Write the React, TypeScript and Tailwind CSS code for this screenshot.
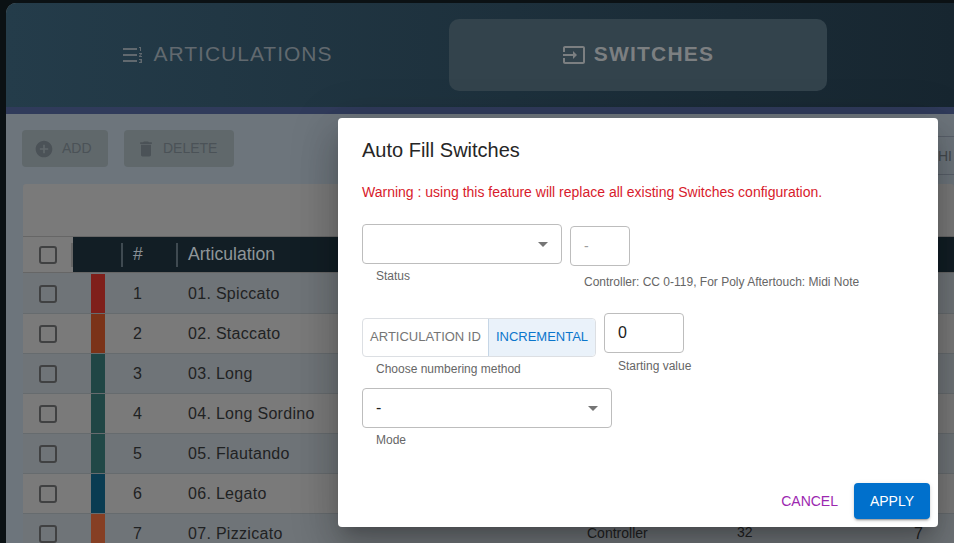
const rows = [
  { n: 1, name: '01. Spiccato', color: 'bg-[#7f1f1a]' },
  { n: 2, name: '02. Staccato', color: 'bg-[#7b3318]' },
  { n: 3, name: '03. Long', color: 'bg-[#204645]' },
  { n: 4, name: '04. Long Sordino', color: 'bg-[#204645]' },
  { n: 5, name: '05. Flautando', color: 'bg-[#214847]' },
  { n: 6, name: '06. Legato', color: 'bg-[#0a3c52]' },
  { n: 7, name: '07. Pizzicato', color: 'bg-[#863f24]' },
];

function Icon({ d, className = '' }: { d: string; className?: string }) {
  return (
    <svg viewBox="0 0 24 24" fill="currentColor" className={className}>
      <path d={d} />
    </svg>
  );
}

function Checkbox() {
  return <div className="w-[18px] h-[18px] rounded-[3px] border-2 border-[#404142]" />;
}

function Caret() {
  return <div className="w-0 h-0 border-x-[5px] border-x-transparent border-t-[5px] border-t-[#757575]" />;
}

function Hint({ className = '', children }: { className?: string; children: React.ReactNode }) {
  return <div className={`text-[12px] leading-[14px] text-[#666] ${className}`}>{children}</div>;
}

export default function App() {
  return (
    <div className="relative w-[954px] h-[543px] overflow-hidden bg-[#0b1114] pt-[3px] pl-[6px] font-['Liberation_Sans',Arial,sans-serif]">
      {/* Window behind the backdrop */}
      <div className="w-[948px] h-[540px] rounded-tl-[10px] overflow-hidden flex flex-col bg-[#6d757c]">
        <div className="h-[104px] shrink-0 flex gap-[33px] pl-[32px] pt-[16px] bg-gradient-to-r from-[#243c4a] to-[#172630]">
          <div className="w-[378px] h-[72px] flex items-center justify-center gap-[8px] text-[#61696f]">
            <Icon className="w-6 h-6" d="M18 17h2v.5h-1v1h1v.5h-2v1h3v-4h-3zm1-9h1V4h-2v1h1zm-1 3h1.8L18 13.1v.9h3v-1h-1.8l1.8-2.1V10h-3zM2 5h14v2H2zm0 12h14v2H2zm0-6h14v2H2z" />
            <span className="text-[21px] leading-[24px] -mt-[2px] tracking-[1px]">ARTICULATIONS</span>
          </div>
          <div className="w-[378px] h-[72px] flex items-center justify-center gap-[8px] rounded-[10px] bg-[#33434c] text-[#7c7f81]">
            <Icon className="w-6 h-6" d="M21 3.01H3c-1.1 0-2 .9-2 2V9h2V4.99h18v14.03H3V15H1v4.01c0 1.1.9 1.98 2 1.98h18c1.1 0 2-.88 2-1.98v-14c0-1.11-.9-2-2-2zM11 16l4-4-4-4v3H1v2h10v3z" />
            <span className="text-[21px] leading-[24px] -mt-[2px] font-bold tracking-[1.2px]">SWITCHES</span>
          </div>
        </div>
        <div className="h-[7px] shrink-0 bg-[#303b5b]" />

        <div className="flex-1 pt-[16px]">
          <div className="flex gap-[16px] pl-[16px] text-[14px] text-[#4b5257]">
            <div className="w-[86px] h-[37px] rounded-[4px] bg-[#60686b] flex items-center pl-[13px] gap-[8px]">
              <Icon className="w-5 h-5 -ml-[1px]" d="M12 2C6.48 2 2 6.48 2 12s4.48 10 10 10 10-4.48 10-10S17.52 2 12 2zm5 11h-4v4h-2v-4H7v-2h4V7h2v4h4v2z" />
              <span>ADD</span>
            </div>
            <div className="w-[110px] h-[37px] rounded-[4px] bg-[#60686b] flex items-center pl-[12px] gap-[7px]">
              <Icon className="w-5 h-5" d="M6 19c0 1.1.9 2 2 2h8c1.1 0 2-.9 2-2V7H6v12zM19 4h-3.5l-1-1h-5l-1 1H5v2h14V4z" />
              <span>DELETE</span>
            </div>
          </div>

          <div className="mt-[17px] ml-[17px] rounded-t-[3px] overflow-hidden">
            <div className="h-[53px] bg-[#7a7a7a] border-b border-[#666]" />
            <div className="h-[36px] flex bg-[#121e25] border-b border-[#666] text-[17.6px]">
              <div className="w-[50px] bg-[#7a7a7a] flex items-center justify-between pl-[16px]">
                <Checkbox />
                <div className="w-[2px] h-[24px] bg-[#666]" />
              </div>
              <div className="w-[50px] flex items-center justify-end">
                <div className="w-[2px] h-[24px] bg-[#3f4a51]" />
              </div>
              <div className="w-[55px] flex items-center justify-between pl-[10px] text-[#8a9196]">
                <span>#</span>
                <div className="w-[2px] h-[24px] bg-[#3f4a51]" />
              </div>
              <div className="flex items-center pl-[10px] text-[#8f9599]">Articulation</div>
            </div>
            {rows.map((r, i) => (
              <div
                key={r.n}
                className={`h-[40px] flex items-stretch border-t text-[16px] tracking-[0.3px] text-[#1f2223] ${i === 0 ? 'border-[#6f7478]' : 'border-[#666b6e]'} ${i % 2 === 0 ? 'bg-[#6f7478]' : 'bg-[#7a7a7a]'}`}
              >
                <div className="w-[68px] flex items-center pl-[16px] shrink-0">
                  <Checkbox />
                </div>
                <div className={`w-[14px] shrink-0 ${r.color}`} />
                <div className="w-[28px] shrink-0" />
                <div className="w-[55px] shrink-0 flex items-center">{r.n}</div>
                <div className="w-[399px] shrink-0 flex items-center">{r.name}</div>
                <div className="w-[150px] shrink-0 flex items-center text-[14px] tracking-normal">{r.n === 7 ? 'Controller' : ''}</div>
                <div className="w-[177px] shrink-0 flex items-center pb-[2px] text-[14px] tracking-normal">{r.n === 7 ? '32' : ''}</div>
                <div className="flex items-center">{r.n === 7 ? '7' : ''}</div>
              </div>
            ))}
          </div>
        </div>
      </div>

      {/* Button peeking out beside the dialog */}
      <div className="absolute left-[938px] top-[136px] w-[16px] h-[39px] border-y border-[#59606a] text-[14px] leading-[38px] text-[#444a4e] overflow-hidden">
        HI
      </div>

      {/* Dialog */}
      <div className="absolute left-[338px] top-[118px] w-[600px] h-[409px] rounded-[4px] bg-white px-[24px] pt-[20px] flex flex-col shadow-[0_11px_15px_-7px_rgba(0,0,0,0.2),0_24px_38px_3px_rgba(0,0,0,0.14),0_9px_46px_8px_rgba(0,0,0,0.12)]">
        <h2 className="text-[20px] leading-[24px] text-[#262626]">Auto Fill Switches</h2>
        <p className="mt-[22px] text-[14px] leading-[16px] text-[#d81b2c]">
          Warning : using this feature will replace all existing Switches configuration.
        </p>

        <div className="mt-[24px] flex gap-[8px]">
          <div>
            <div className="w-[200px] h-[40px] rounded-[4px] border border-[#bdbdbd] flex items-center justify-end pr-[13px]">
              <Caret />
            </div>
            <Hint className="mt-[5px] ml-[14px]">Status</Hint>
          </div>
          <div className="pt-[2px]">
            <div className="w-[60px] h-[40px] rounded-[4px] border border-[#bdbdbd] flex items-center pl-[13px] text-[14px] text-[#9e9e9e]">
              -
            </div>
            <Hint className="mt-[9px] ml-[14px] whitespace-nowrap">Controller: CC 0-119, For Poly Aftertouch: Midi Note</Hint>
          </div>
        </div>

        <div className="mt-[24px] flex gap-[8px]">
          <div className="pt-[5px]">
            <div className="w-[234px] h-[39px] flex rounded-[4px] border border-[#dcdfe3] text-[13px] leading-[15px]">
              <div className="w-[125px] flex items-center justify-center pb-[2px] text-[#757575]">ARTICULATION ID</div>
              <div className="flex-1 flex items-center justify-center pb-[2px] rounded-r-[4px] border-l border-[#c6d6e6] bg-[#eaf2fa] text-[#0b76cc]">
                INCREMENTAL
              </div>
            </div>
            <Hint className="mt-[5px] ml-[14px]">Choose numbering method</Hint>
          </div>
          <div>
            <div className="w-[80px] h-[40px] rounded-[4px] border border-[#bdbdbd] flex items-center pl-[13px] text-[16px] text-[#212121]">
              0
            </div>
            <Hint className="mt-[6px] ml-[14px]">Starting value</Hint>
          </div>
        </div>

        <div className="mt-[12px]">
          <div className="w-[250px] h-[40px] rounded-[4px] border border-[#bdbdbd] flex items-center justify-between pl-[13px] pr-[13px] text-[16px] text-[#212121]">
            <span>-</span>
            <Caret />
          </div>
          <Hint className="mt-[5px] ml-[14px]">Mode</Hint>
        </div>

        <div className="mt-auto mb-[8px] -mr-[16px] flex items-center justify-end gap-[16px] text-[14px]">
          <span className="text-[#9c27b0]">CANCEL</span>
          <div className="w-[76px] h-[36px] rounded-[4px] bg-[#0070cc] text-white flex items-center justify-center shadow-[0_3px_1px_-2px_rgba(0,0,0,0.2),0_2px_2px_0_rgba(0,0,0,0.14),0_1px_5px_0_rgba(0,0,0,0.12)]">
            APPLY
          </div>
        </div>
      </div>
    </div>
  );
}
